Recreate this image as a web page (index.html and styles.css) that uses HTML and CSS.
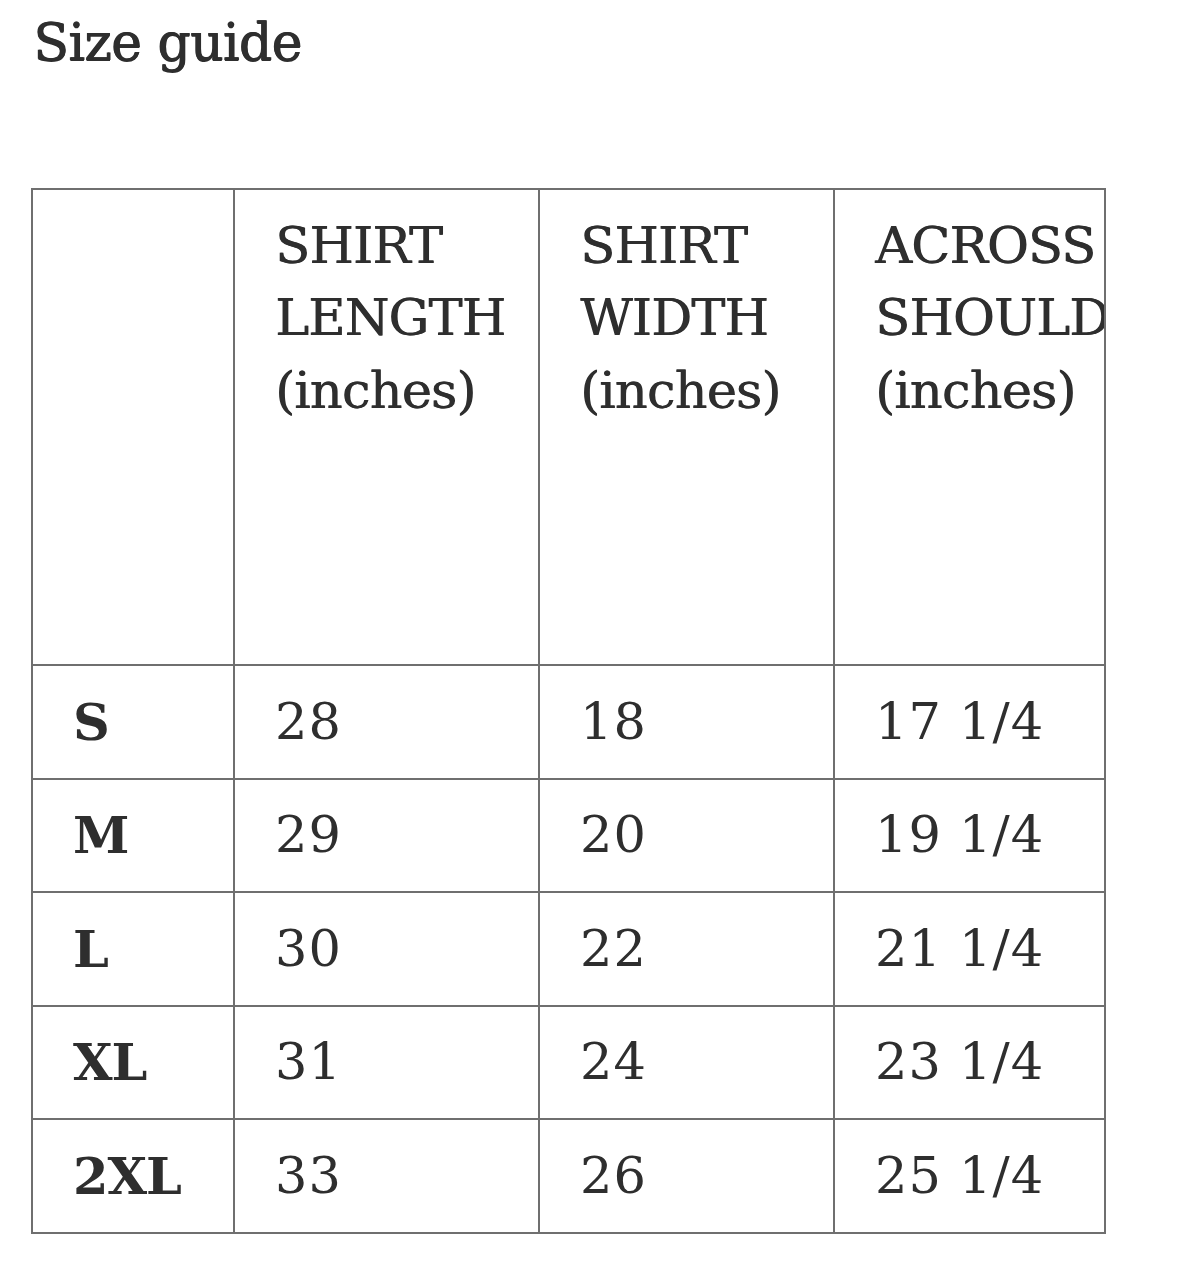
FILE: index.html
```html
<!DOCTYPE html>
<html lang="en">
<head>
<meta charset="utf-8">
<title>Size guide</title>
<link rel="stylesheet" href="styles.css">
</head>
<body>
<main class="page">
  <h2 class="title">Size guide</h2>
  <div class="table-wrap">
    <table class="size-table">
      <colgroup>
        <col class="c-size">
        <col class="c-len">
        <col class="c-wid">
        <col class="c-sh">
      </colgroup>
      <thead>
        <tr class="head-row">
          <th></th>
          <th>SHIRT<br>LENGTH<br><span class="unit">(inches)</span></th>
          <th>SHIRT<br>WIDTH<br><span class="unit">(inches)</span></th>
          <th>ACROSS<br>SHOULDER<br><span class="unit">(inches)</span></th>
        </tr>
      </thead>
      <tbody>
        <tr><td class="size">S</td><td>28</td><td>18</td><td>17 1/4</td></tr>
        <tr><td class="size">M</td><td>29</td><td>20</td><td>19 1/4</td></tr>
        <tr><td class="size">L</td><td>30</td><td>22</td><td>21 1/4</td></tr>
        <tr><td class="size">XL</td><td>31</td><td>24</td><td>23 1/4</td></tr>
        <tr><td class="size">2XL</td><td>33</td><td>26</td><td>25 1/4</td></tr>
      </tbody>
    </table>
  </div>
</main>
</body>
</html>
```
FILE: styles.css
```css
html, body {
  margin: 0;
  padding: 0;
  background: #ffffff;
}

.page {
  padding: 12px 0 0 31px;
  font-family: "DejaVu Serif", "Liberation Serif", serif;
  color: #2e2e2e;
}

.title {
  margin: 0 0 116px 2px;
  font-size: 52px;
  font-weight: normal;
  line-height: normal;
  letter-spacing: -0.6px;
  text-shadow: 1px 0 0 #2e2e2e, 0.5px 0.5px 0 #2e2e2e;
}

.table-wrap {
  width: 1075px;
  box-sizing: border-box;
  border: 2px solid #6f6f6f;
  overflow: hidden;
}

.size-table {
  table-layout: fixed;
  width: 1222px;
  border-collapse: separate;
  border-spacing: 0;
  font-size: 51px;
  line-height: 72.5px;
}

.c-size { width: 202px; }
.c-len { width: 305px; }
.c-wid { width: 295px; }
.c-sh { width: 420px; }

.size-table th,
.size-table td {
  box-sizing: border-box;
  padding: 19.5px 10px 19.5px 40px;
  border-right: 2px solid #6f6f6f;
  border-bottom: 2px solid #6f6f6f;
  text-align: left;
  white-space: nowrap;
  overflow: hidden;
}

.size-table th {
  vertical-align: top;
  font-weight: normal;
  letter-spacing: -0.8px;
  text-shadow: 0.7px 0 0 #2e2e2e;
}

.head-row {
  height: 476px;
}

.size-table td {
  vertical-align: middle;
  letter-spacing: 1px;
}

.size-table tbody tr:last-child td {
  border-bottom: none;
}

.size-table td.size {
  font-weight: bold;
  letter-spacing: -1px;
}
```
